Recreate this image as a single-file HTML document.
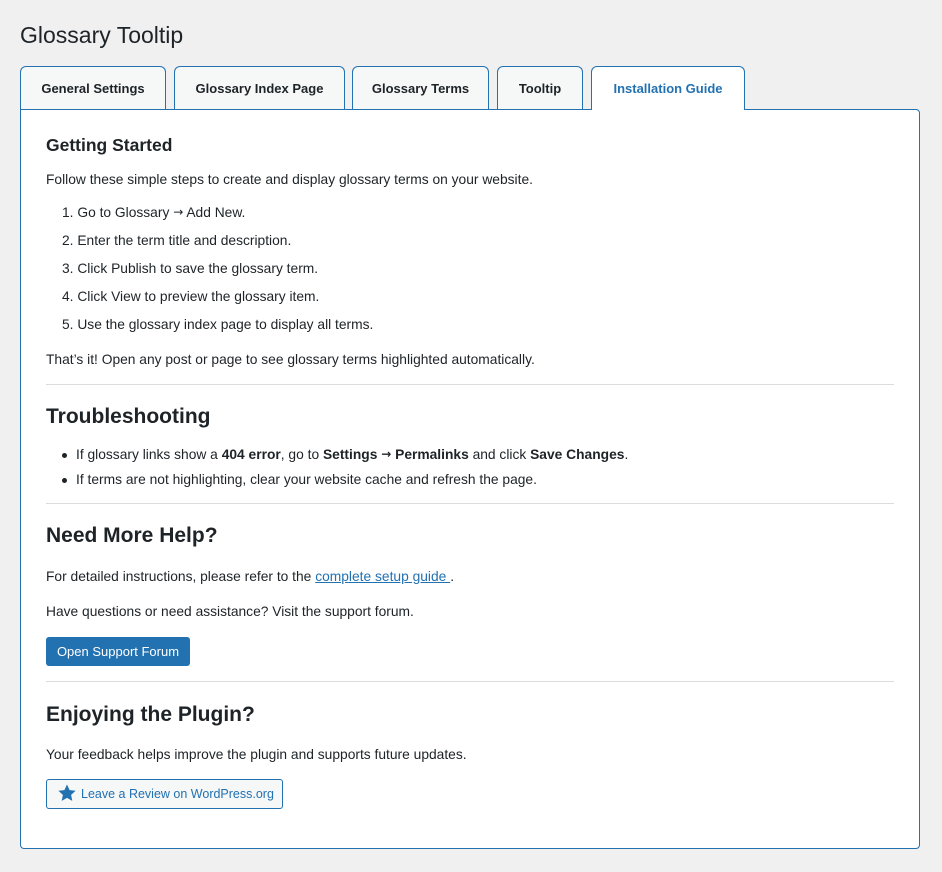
<!DOCTYPE html>
<html><head><meta charset="utf-8"><style>
*{margin:0;padding:0;box-sizing:border-box}
body{width:942px;height:872px;background:#f0f0f1;font-family:"Liberation Sans",sans-serif;color:#1d2327;position:relative;overflow:hidden;font-size:13.8px}
.a{position:absolute;white-space:nowrap;line-height:20px}
h1{position:absolute;left:20px;top:20px;font-size:23px;font-weight:400;line-height:30px}
.tab{position:absolute;top:66px;height:44px;border:1px solid #2271b1;border-bottom:none;border-radius:6px 6px 0 0;background:#f6f7f7;font-weight:600;font-size:13px;text-align:center;line-height:43px;color:#1d2327}
.tab.act{background:#fff;color:#2271b1;height:44px;z-index:2}
.panel{position:absolute;left:20px;top:109px;width:900px;height:740px;background:#fff;border:1px solid #2271b1;border-radius:0 4px 4px 4px}
.hr{position:absolute;left:46px;width:848px;height:1px;background:#dcdcde}
h2{position:absolute;left:46px;font-size:21px;font-weight:700;line-height:28px;white-space:nowrap}
b{font-weight:700}
.ar{font-family:"DejaVu Sans",sans-serif;font-size:12px;position:relative;top:-1px}
.btn{position:absolute;left:46px;top:637px;width:144px;height:29px;background:#2271b1;color:#fff;border-radius:3px;line-height:29px;text-align:center;font-size:13px}
.btn2{position:absolute;left:46px;top:779px;width:237px;height:30px;background:#f6f7f7;color:#2271b1;border:1px solid #2271b1;border-radius:3px;line-height:28px;font-size:12.5px;padding-left:34px;white-space:nowrap}
.dot{position:absolute;left:62px;width:5px;height:5px;border-radius:50%;background:#1d2327}
</style></head><body>
<h1>Glossary Tooltip</h1>
<div class="tab" style="left:20px;width:146px">General Settings</div>
<div class="tab" style="left:174px;width:171px">Glossary Index Page</div>
<div class="tab" style="left:352px;width:137px">Glossary Terms</div>
<div class="tab" style="left:497px;width:86px">Tooltip</div>
<div class="tab act" style="left:591px;width:154px">Installation Guide</div>
<div class="panel"></div>
<div style="position:absolute;left:592px;top:108px;width:152px;height:3px;background:#fff;z-index:3"></div>

<div class="a" style="left:46px;top:134px;font-size:17.5px;font-weight:600;line-height:22px">Getting Started</div>
<div class="a" style="left:46px;top:170px">Follow these simple steps to create and display glossary terms on your website.</div>
<div class="a" style="left:62px;top:203px">1. Go to Glossary <span class="ar">→</span> Add New.</div>
<div class="a" style="left:62px;top:231px">2. Enter the term title and description.</div>
<div class="a" style="left:62px;top:259px">3. Click Publish to save the glossary term.</div>
<div class="a" style="left:62px;top:287px">4. Click View to preview the glossary item.</div>
<div class="a" style="left:62px;top:315px">5. Use the glossary index page to display all terms.</div>
<div class="a" style="left:46px;top:350px">That’s it! Open any post or page to see glossary terms highlighted automatically.</div>
<div class="hr" style="top:384px"></div>
<h2 style="top:403px">Troubleshooting</h2>
<div class="dot" style="top:453px"></div>
<div class="a" style="left:76px;top:445px">If glossary links show a <b>404 error</b>, go to <b>Settings <span class="ar">→</span> Permalinks</b> and click <b>Save Changes</b>.</div>
<div class="dot" style="top:478px"></div>
<div class="a" style="left:76px;top:470px">If terms are not highlighting, clear your website cache and refresh the page.</div>
<div class="hr" style="top:503px"></div>
<h2 style="top:522px">Need More Help?</h2>
<div class="a" style="left:46px;top:567px">For detailed instructions, please refer to the <span style="color:#2271b1;text-decoration:underline">complete setup guide </span>.</div>
<div class="a" style="left:46px;top:602px">Have questions or need assistance? Visit the support forum.</div>
<div class="btn">Open Support Forum</div>
<div class="hr" style="top:681px"></div>
<h2 style="top:701px">Enjoying the Plugin?</h2>
<div class="a" style="left:46px;top:745px">Your feedback helps improve the plugin and supports future updates.</div>
<div class="btn2"><svg style="position:absolute;left:10px;top:3px" width="20" height="20" viewBox="0 0 20 20"><path d="M10 1.5l2.6 5.6 6 .7-4.5 4.1 1.2 6L10 14.9l-5.3 3 1.2-6L1.4 7.8l6-.7z" fill="#2271b1"/></svg>Leave a Review on WordPress.org</div>
</body></html>
